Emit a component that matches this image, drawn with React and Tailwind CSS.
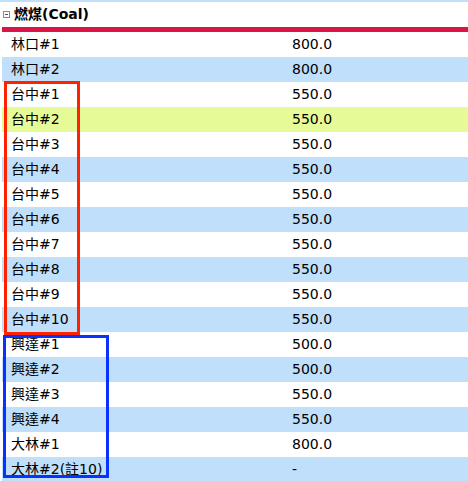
const ROWS = [
  ['林口#1', '800.0'],
  ['林口#2', '800.0'],
  ['台中#1', '550.0'],
  ['台中#2', '550.0'],
  ['台中#3', '550.0'],
  ['台中#4', '550.0'],
  ['台中#5', '550.0'],
  ['台中#6', '550.0'],
  ['台中#7', '550.0'],
  ['台中#8', '550.0'],
  ['台中#9', '550.0'],
  ['台中#10', '550.0'],
  ['興達#1', '500.0'],
  ['興達#2', '500.0'],
  ['興達#3', '550.0'],
  ['興達#4', '550.0'],
  ['大林#1', '800.0'],
  ['大林#2(註10)', '-'],
];

function rowBg(i) {
  if (i === 3) return 'bg-[#e6fb98]';
  return i % 2 === 1 ? 'bg-[#bfdffb]' : 'bg-white';
}

export default function App() {
  return (
    <div
      className="relative w-[468px] h-[481px] overflow-hidden bg-white text-[14px] text-black"
      style={{ fontFamily: '"DejaVu Sans", "Noto Sans CJK TC", sans-serif' }}
    >
      <div className="h-[2px] bg-[#bfdffb]" />
      <div className="pl-[2px]">
        {/* group header */}
        <div className="h-[25px] flex items-center border-b-[5px] border-[#dc1446] box-content">
          <span className="ml-[1px] w-[7px] h-[7px] border border-[#888] flex items-center justify-center">
            <span className="w-[3px] h-px bg-[#555]" />
          </span>
          <span className="ml-[4px] font-bold text-[14px]">燃煤(Coal)</span>
        </div>
        {ROWS.map(([name, val], i) => (
          <div key={name} className={`h-[25px] flex items-center ${rowBg(i)}`}>
            <span className="w-[290px] pl-[9px] whitespace-nowrap">{name}</span>
            <span>{val}</span>
          </div>
        ))}
      </div>

      {/* annotation boxes */}
      <div className="absolute left-[4px] top-[81px] w-[76px] h-[254px] border-[3px] border-[#ff2200] pointer-events-none" />
      <div className="absolute left-[3px] top-[335px] w-[106px] h-[143px] border-[3px] border-[#0a32ff] pointer-events-none" />
    </div>
  );
}
